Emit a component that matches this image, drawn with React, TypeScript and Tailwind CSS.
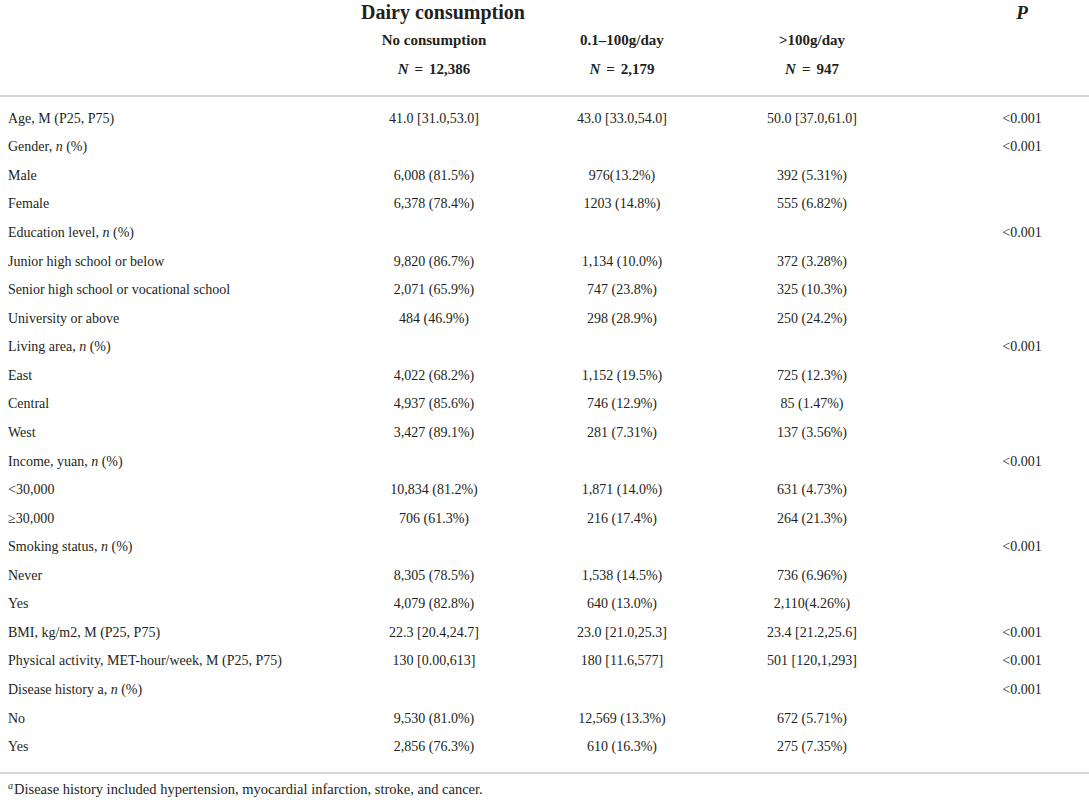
const ROWS: { label: React.ReactNode; a?: string; b?: string; c?: string; p?: string }[] = [
  { label: "Age, M (P25, P75)", a: "41.0 [31.0,53.0]", b: "43.0 [33.0,54.0]", c: "50.0 [37.0,61.0]", p: "<0.001" },
  { label: <>Gender, <i>n</i> (%)</>, p: "<0.001" },
  { label: "Male", a: "6,008 (81.5%)", b: "976(13.2%)", c: "392 (5.31%)" },
  { label: "Female", a: "6,378 (78.4%)", b: "1203 (14.8%)", c: "555 (6.82%)" },
  { label: <>Education level, <i>n</i> (%)</>, p: "<0.001" },
  { label: "Junior high school or below", a: "9,820 (86.7%)", b: "1,134 (10.0%)", c: "372 (3.28%)" },
  { label: "Senior high school or vocational school", a: "2,071 (65.9%)", b: "747 (23.8%)", c: "325 (10.3%)" },
  { label: "University or above", a: "484 (46.9%)", b: "298 (28.9%)", c: "250 (24.2%)" },
  { label: <>Living area, <i>n</i> (%)</>, p: "<0.001" },
  { label: "East", a: "4,022 (68.2%)", b: "1,152 (19.5%)", c: "725 (12.3%)" },
  { label: "Central", a: "4,937 (85.6%)", b: "746 (12.9%)", c: "85 (1.47%)" },
  { label: "West", a: "3,427 (89.1%)", b: "281 (7.31%)", c: "137 (3.56%)" },
  { label: <>Income, yuan, <i>n</i> (%)</>, p: "<0.001" },
  { label: "<30,000", a: "10,834 (81.2%)", b: "1,871 (14.0%)", c: "631 (4.73%)" },
  { label: "≥30,000", a: "706 (61.3%)", b: "216 (17.4%)", c: "264 (21.3%)" },
  { label: <>Smoking status, <i>n</i> (%)</>, p: "<0.001" },
  { label: "Never", a: "8,305 (78.5%)", b: "1,538 (14.5%)", c: "736 (6.96%)" },
  { label: "Yes", a: "4,079 (82.8%)", b: "640 (13.0%)", c: "2,110(4.26%)" },
  { label: "BMI, kg/m2, M (P25, P75)", a: "22.3 [20.4,24.7]", b: "23.0 [21.0,25.3]", c: "23.4 [21.2,25.6]", p: "<0.001" },
  { label: "Physical activity, MET-hour/week, M (P25, P75)", a: "130 [0.00,613]", b: "180 [11.6,577]", c: "501 [120,1,293]", p: "<0.001" },
  { label: <>Disease history a, <i>n</i> (%)</>, p: "<0.001" },
  { label: "No", a: "9,530 (81.0%)", b: "12,569 (13.3%)", c: "672 (5.71%)" },
  { label: "Yes", a: "2,856 (76.3%)", b: "610 (16.3%)", c: "275 (7.35%)" },
];

// label | no consumption | 0.1-100 | >100 | P
const GRID = "grid grid-cols-[334px_200px_176px_204px_1fr]";

function NCount({ n }: { n: string }) {
  return (
    <>
      <i>N</i>
      <span className="mx-[6px]">=</span>
      {n}
    </>
  );
}

export default function App() {
  return (
    <div className="w-[1089px] h-[800px] bg-white text-[#231f20] font-['Liberation_Serif',serif] text-[14px] overflow-hidden">
      {/* HEADER */}
      <div className={GRID}>
        <div />
        <div className="text-center pl-[18px] font-bold text-[20px] leading-[24px] whitespace-nowrap">Dairy consumption</div>
        <div />
        <div />
        <div className="text-center pl-[41px] font-bold italic text-[19px] leading-[26px]">P</div>
      </div>
      <div className={`${GRID} font-bold text-[15px] leading-[29px]`}>
        <div />
        <div className="text-center">No consumption</div>
        <div className="text-center">0.1–100g/day</div>
        <div className="text-center">&gt;100g/day</div>
        <div />
      </div>
      <div className={`${GRID} font-bold text-[15px] leading-[29px]`}>
        <div />
        <div className="text-center"><NCount n="12,386" /></div>
        <div className="text-center"><NCount n="2,179" /></div>
        <div className="text-center"><NCount n="947" /></div>
        <div />
      </div>

      {/* BODY */}
      <div className="mt-[11px] border-t-2 border-b-2 border-[#d4d4d4] pt-[7px] pb-[11px]">
        {ROWS.map((r, i) => (
          <div key={i} className={`${GRID} h-[28.57px] items-center`}>
            <div className="pl-[8px] whitespace-nowrap">{r.label}</div>
            <div className="text-center">{r.a}</div>
            <div className="text-center">{r.b}</div>
            <div className="text-center">{r.c}</div>
            <div className="text-center pl-[41px]">{r.p}</div>
          </div>
        ))}
      </div>

      {/* FOOTNOTE */}
      <div className="pl-[8px] pt-[5px] text-[14.5px]">
        <sup className="italic text-[10px] mr-[1px]">a</sup>Disease history included hypertension, myocardial infarction, stroke, and cancer.
      </div>
    </div>
  );
}
